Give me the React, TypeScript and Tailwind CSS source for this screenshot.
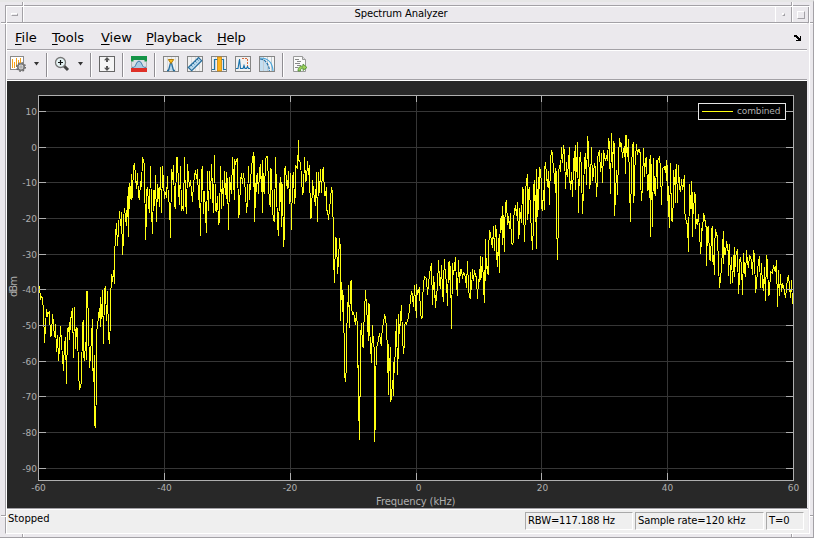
import React from "react";

const FONT = "font-['DejaVu_Sans',sans-serif]";

type Chunk = { x: number; y: number; pts: string };

// Trace samples, in thirds of a pixel relative to each chunk's origin.
const TRACE: Chunk[] = [
  {
    x: 30,
    y: 130,
    pts: "28,468 31,509 34,500 37,505 40,543 43,638 46,588 49,538 52,556 55,548 58,546 61,622 64,612 67,552 70,580 73,622 76,583 79,665 82,615 85,692 88,655 91,588 94,640 100,722 103,633 106,690 106,620 109,762 112,595 115,605 118,576 118,630 121,572 127,535 130,684 133,531 136,656 139,590 142,600 145,725 148,779 151,770 154,755 157,580 160,571 160,675 163,692 166,637 169,689 169,486 172,484 175,581 178,713 181,675 187,568 187,690 190,755 193,675 193,880 196,893 199,762 199,609 202,585 208,535 211,590 211,502 214,566 217,480 220,641 223,477 226,472 229,573 232,484 235,617 238,641 241,570 241,519 244,432 247,455 250,421 253,461 253,379 256,318 259,280 262,347 268,243 271,287 274,247 277,374 280,323 280,267 283,235 289,287 292,198 295,320 295,172 298,238 298,160 301,206 304,133 304,211 307,196 310,108 313,100 319,176 322,130 325,200 328,209 331,153 334,170 337,82 340,94 343,106 346,329 349,257 349,180 352,172 355,224 358,248 361,108 364,238 367,311 370,180 373,227 376,136 379,275 382,162 385,184 388,230 391,112 394,248 397,109 403,206 406,187 409,203 412,139 415,215 418,218 421,323 424,118 427,149 430,105 433,224 436,236 439,84 442,82 445,176 448,226 451,109 454,244 457,232 460,242 463,82 466,211 469,251 472,102 475,140 478,170 481,151 487,215 490,160 496,121 499,146 502,118 505,211 508,148 511,318 514,124 517,109 520,251 523,184 529,308 532,124 535,242 538,124",
  },
  {
    x: 210,
    y: 130,
    pts: "1,206 4,102 7,184 10,250 13,75 16,240 19,244 22,198 25,284 28,275 31,109 34,238 37,151 40,227 43,124 46,195 49,125 49,206 52,145 55,299 58,142 61,168 64,192 67,82 70,148 73,209 73,88 76,100 82,85 85,263 88,245 91,150 94,130 97,163 100,128 106,185 109,248 112,215 115,109 118,209 121,155 124,110 130,67 133,275 133,77 136,235 139,140 142,130 145,193 148,120 151,103 154,187 157,90 157,250 160,130 163,193 166,88 169,79 172,80 175,165 178,215 181,232 181,115 184,118 187,238 190,268 193,277 196,82 199,180 202,280 205,317 208,178 211,140 214,290 214,160 217,165 220,350 223,308 223,118 226,109 229,160 232,178 235,124 238,223 241,130 244,299 247,145 250,127 253,223 256,188 256,106 262,118 265,31 265,90 268,94 271,97 274,145 277,196 280,183 283,82 286,155 289,152 292,94 295,135 298,106 301,268 304,260 307,151 310,182 313,207 316,227 319,127 322,277 325,127 328,190 331,118 334,190 337,120 340,112 343,196 346,195 349,170 349,240 352,243 355,269 361,206 364,172 367,186 367,260 370,263 370,380 373,458 376,320 379,328 382,431 385,394 388,324 391,360 391,572 394,455 397,545 397,480 400,512 400,607 403,610 403,730 406,755 409,705 409,588 412,568 415,466 418,593 421,457 424,451 424,530 427,556 430,545 436,585 439,547 442,596 442,712 445,708",
  },
  {
    x: 340,
    y: 230,
    pts: "55,515 58,629 58,500 61,500 61,322 64,280 67,346 70,353 70,310 76,181 79,228 82,278 85,332 85,220 88,223 88,292 94,398 97,284 100,350 103,352 103,635 106,567 106,468 109,350 112,345 118,309 121,335 124,347 124,322 127,297 133,256 136,262 139,297 142,360 145,494 145,343 148,422 151,350 151,515 154,506 157,450 160,497 160,397 163,428 166,337 169,268 172,434 175,345 175,253 178,311 181,264 184,226 187,322 190,371 193,338 193,287 196,278 199,282 205,262 208,235 214,182 217,198 220,230 223,166 226,223 229,263 229,163 232,194 238,172 241,250 244,266 247,262 247,213 250,160 253,139 259,146 262,194 268,133 274,99 277,226 280,139 283,205 283,155 286,233 289,197 292,172 295,90 298,155 301,178 304,106 307,184 310,215 310,152 313,88 316,146 319,148 322,227 325,100 328,94 331,205 331,109 334,296 337,100 340,136 346,82 349,164 352,197 355,90 358,160 361,118 364,120 367,146 370,125 376,142 379,173 382,94 385,175 388,203 391,206 391,127 394,180 397,118 400,152 403,121 406,135 409,144 412,206 415,148 418,155",
  },
  {
    x: 480,
    y: 120,
    pts: "1,408 1,480 4,466 7,411 10,500 13,548 16,357 16,482 19,415 22,459 25,463 25,390 28,331 31,343 37,385 40,319 43,392 46,316 49,340 49,400 52,440 55,355 58,458 58,384 61,300 64,288 67,374 67,259 70,310 73,395 73,335 76,250 79,240 82,316 85,289 88,326 91,280 94,371 97,374 100,365 100,295 106,256 109,288 112,247 115,356 118,332 118,265 124,308 127,202 130,213 130,262 133,365 136,268 136,210 139,187 142,163 142,299 145,265 145,217 148,200 151,280 154,338 157,389 160,308 160,208 163,179 166,305 169,148 169,386 172,207 175,271 175,172 178,206 178,140 181,155 184,190 184,262 187,272 190,211 193,271 193,151 196,127 202,200 205,154 208,254 211,118 214,94 217,98 220,158 223,161 226,220 226,145 229,163 229,290 232,419 235,288 235,157 238,136 241,157 244,82 247,130 250,76 253,97 256,208 259,127 262,170 268,82 268,163 271,211 274,155 277,230 280,133 283,94 286,209 286,76 289,155 292,67 295,278 298,124 301,97 304,153 307,281 310,209 313,121 316,100 319,194 322,49 325,73 328,206 331,187 334,82 337,184 343,130 346,145 349,230 352,175 352,115 358,91 361,157 364,98 367,188 370,91 376,124 379,106 382,124 385,55 388,70 391,223 394,40 397,145 400,64 403,76 403,287 406,227 409,151 412,224 415,110 418,55 421,79 424,73 427,115 430,85 433,110 436,46 436,161 439,46 442,110 445,58 448,190 451,305 454,145 457,79 460,66 460,248 463,208 463,155 469,73 472,106 475,88 478,88",
  },
  {
    x: 640,
    y: 120,
    pts: "1,106 1,178 4,242 7,195 10,85 13,170 16,115 19,112 22,212 25,205 28,118 31,350 31,106 34,157 37,320 40,115 43,218 46,227 49,121 52,206 52,124 58,112 61,145 64,254 67,145 73,139 76,158 79,121 82,242 82,134 85,258 88,323 91,130 94,302 97,305 100,227 100,151 103,196 106,148 106,250 109,133 112,248 115,136 118,205 121,217 124,178 127,210 130,190 133,166 133,271 139,310 142,310 145,395 148,193 151,268 154,184 157,350 157,215 160,283 163,220 166,226 166,328 169,296 172,314 175,283 178,330 181,401 184,362 184,325 187,332 190,280 193,292 199,328 199,437 202,325 205,317 208,416 211,424 214,332 217,319 217,425 220,405 223,464 223,382 226,328 229,343 232,350 235,434 238,503 241,473 244,448 247,382 250,334 250,431 253,382 256,404 259,364 265,400 265,467 268,373 271,491 274,412 277,488 280,428 283,382 283,470 286,412 289,400 292,388 295,521 298,472 298,424 301,412 304,438 307,524 310,400 313,452 316,470 319,391 322,427 325,443 328,406 331,410 334,425 337,466 340,391 343,406 346,518 349,495 352,448 358,409 361,503 364,430 367,497 370,512 373,442 376,542 379,406 382,425 385,527 388,521 391,455 397,460 400,436 406,457 409,421 412,560 415,451 418,527 421,463 424,517 427,490 433,514 436,533 442,475 445,466 451,533 454,481 457,551",
  },
];

const tracePoints = TRACE.map(({ x, y, pts }) =>
  pts
    .split(" ")
    .map((p) => {
      const [px, py] = p.split(",").map(Number);
      return `${(x + (px + 0.5) / 3).toFixed(2)},${(y + py / 3).toFixed(2)}`;
    })
    .join(" "),
).join(" ");

const Y_TICKS: [number, string][] = [
  [111, "10"], [147, "0"], [182, "-10"], [218, "-20"], [254, "-30"], [289, "-40"],
  [325, "-50"], [361, "-60"], [396, "-70"], [432, "-80"], [468, "-90"],
];
const X_TICKS: [number, string, number][] = [
  [38, "-60", 38.5], [164, "-40", 164.5], [290, "-20", 290], [416, "0", 418.5],
  [541, "20", 542.5], [667, "40", 667.5], [793, "60", 793.5],
];

function SpectrumPlot() {
  return (
    <svg width="800" height="427" viewBox="7 81 800 427" className={`block shrink-0 bg-[#282828] ${FONT}`}>
      <rect x="38" y="95" width="756" height="386" fill="#000" shapeRendering="crispEdges" />
      <polyline points={tracePoints} fill="none" stroke="#ffff11" strokeWidth="1" shapeRendering="crispEdges" />
      <g shapeRendering="crispEdges" fill="#dfdfdf" opacity="0.24">
        {Y_TICKS.map(([y]) => <rect key={y} x="39" y={y} width="754" height="1" />)}
        {X_TICKS.slice(1, -1).map(([x]) => <rect key={x} x={x} y="96" width="1" height="384" />)}
      </g>
      <g shapeRendering="crispEdges" fill="#afafaf">
        {Y_TICKS.map(([y]) => (
          <React.Fragment key={y}>
            <rect x="39" y={y} width="7" height="1" />
            <rect x="786" y={y} width="7" height="1" />
          </React.Fragment>
        ))}
        {X_TICKS.map(([x]) => (
          <React.Fragment key={x}>
            <rect x={x} y="96" width="1" height="6" />
            <rect x={x} y="473" width="1" height="7" />
          </React.Fragment>
        ))}
      </g>
      <rect x="38.5" y="95.5" width="755" height="385" fill="none" stroke="#afafaf" shapeRendering="crispEdges" />
      <rect x="698.5" y="103.5" width="87" height="16" fill="#000" stroke="#e6e6e6" shapeRendering="crispEdges" />
      <rect x="702" y="111" width="31" height="1" fill="#ffff11" />
      <g fill="#afafaf" fontSize="9">
        <text x="737" y="114" textLength="43.5">combined</text>
        {Y_TICKS.map(([y, label]) => <text key={y} x="37" y={y + 4} textAnchor="end">{label}</text>)}
        {X_TICKS.map(([, label, x]) => <text key={label} x={x} y="491" textAnchor="middle">{label}</text>)}
        <text x="376" y="505" textLength="79.5" fontSize="10">Frequency (kHz)</text>
        <text transform="translate(17 297) rotate(-90)" textLength="21" fontSize="10">dBm</text>
      </g>
    </svg>
  );
}

function Icon({ children }: { children: React.ReactNode }) {
  return <svg width="16" height="16" viewBox="0 0 16 16" className="block shrink-0">{children}</svg>;
}

function Tile() {
  return (
    <>
      <rect x=".5" y=".5" width="15" height="15" fill="#f1f1f1" stroke="#858585" />
      <path d="M4.5 1v14M8.5 1v14M12.5 1v14" stroke="#dcdcdc" />
    </>
  );
}

function SettingsIcon() {
  return (
    <Icon>
      <rect x=".5" y=".5" width="13" height="13" fill="#fff" stroke="#8a8a8a" />
      <path d="M2.5 3v9M4.5 6v6M6.5 2v9M8.5 4v5M10.5 2v5" stroke="#f5a31a" />
      <circle cx="11" cy="11" r="3.2" fill="#ddd" stroke="#777" strokeWidth="1.6" />
      <circle cx="11" cy="11" r="4.4" fill="none" stroke="#666" strokeWidth="1.2" strokeDasharray="1.7 1.75" />
      <circle cx="11" cy="11" r="1.1" fill="#fff" stroke="#777" strokeWidth=".7" />
    </Icon>
  );
}

function ZoomIcon() {
  return (
    <Icon>
      <path d="M9.5 9.5 14 14" stroke="#444" strokeWidth="3" />
      <circle cx="6.5" cy="6.5" r="5" fill="#e6f4f5" stroke="#777" strokeWidth="1.3" />
      <path d="M4 6.5h5M6.5 4v5" stroke="#111" strokeWidth="1.2" />
    </Icon>
  );
}

function ScaleIcon() {
  return (
    <Icon>
      <rect x=".5" y=".5" width="15" height="15" fill="#f5f5f5" stroke="#666" />
      <path d="M8 1 11 4.3H9V6H7V4.3H5zM8 15 11 11.7H9V10H7v1.7H5z" fill="#555" />
    </Icon>
  );
}

function MaskIcon() {
  return (
    <Icon>
      <rect width="16" height="16" fill="#d9e0e4" />
      <path d="M0 0h16v5.5h-2.5V4h-11v1.5H0z" fill="#159447" />
      <path d="M1 11.5h1.5C5 11.5 5 5 8 5s3 6.5 5.5 6.5H15V13H1z" fill="#a9cbe2" />
      <path d="M1 11.3h1.5C5 11.3 5 5.2 8 5.2s3 6.1 5.5 6.1H15" fill="none" stroke="#3779a8" />
      <rect y="12" width="16" height="4" fill="#df3028" />
      <path d="M0 5.5v6.5M16 5.5v6.5" stroke="#8b8b8b" />
    </Icon>
  );
}

function PeakIcon() {
  return (
    <Icon>
      <Tile />
      <path d="M4 14.5h1.5L7.5 7h1l2 7.5H12" fill="#b9d9ed" stroke="#286f9e" strokeWidth="1.3" />
      <path d="M5.3 3.5h5.4L8 7.5z" fill="#ffc11c" stroke="#b37c0b" />
    </Icon>
  );
}

function MeasureIcon() {
  return (
    <Icon>
      <Tile />
      <path d="M1.3 11.5 11.5 1.5l3.2 3.2L4.7 14.7z" fill="#b9d9ed" stroke="#286f9e" strokeWidth="1.2" />
      <path d="m4 9 1.5 1.5M6 7l1.5 1.5M8 5l1.5 1.5M10 3l1.5 1.5" stroke="#286f9e" strokeWidth=".9" />
    </Icon>
  );
}

function ChannelIcon() {
  return (
    <Icon>
      <Tile />
      <path d="M1 13.5h2.5V3.5h9v10H15" fill="none" stroke="#1b75aa" strokeWidth="1.2" />
      <rect x="6.5" y="1" width="4" height="14" fill="#ffb51b" stroke="#ca860e" strokeWidth=".8" />
    </Icon>
  );
}

function DistortionIcon() {
  return (
    <Icon>
      <rect x=".5" y=".5" width="15" height="15" fill="#f1f1f1" stroke="#858585" />
      <path d="M1 12.5h2L4.5 3 5.5 12.5h2.5l1-3 1 3h1.5l1-2 1 2H15" fill="none" stroke="#1771ad" strokeWidth="1.1" />
      <path d="M7 2.5h6" stroke="#d86a3c" strokeDasharray="2 1" />
      <path d="M12.5 3v7" stroke="#d86a3c" strokeDasharray="2 1" />
    </Icon>
  );
}

function CcdfIcon() {
  return (
    <Icon>
      <rect x=".5" y=".5" width="15" height="15" fill="#f5f5f5" stroke="#858585" />
      <path d="M1 3c5 0 9 5 9.5 12H1z" fill="#c4def0" />
      <path d="M4.5 1v14M8.5 1v14M12.5 1v14" stroke="#c3ccd2" />
      <path d="M1 2C9 2 13.5 7 14 15" fill="none" stroke="#4aa6dc" strokeWidth="1.2" />
      <path d="M1 3c5 0 9 5 9.5 12" fill="none" stroke="#206fa5" strokeWidth="1.2" strokeDasharray="3 1" />
    </Icon>
  );
}

function ScriptIcon() {
  return (
    <Icon>
      <path d="M1.5.5h9l3 3v12h-12z" fill="#fafafa" stroke="#999" />
      <path d="M10.5.5v3h3" fill="#ddd" stroke="#999" />
      <path d="M3 3.5h4M5 5.5h4M3 7.5h5M5 9.5h4M3 11.5h3" stroke="#888" />
      <path d="M6 15c0-4 2-5 5-5V8l4 3.5-4 3V12c-2 0-2.5 1-2.5 3z" fill="#9ed15b" stroke="#4a8c32" strokeWidth=".8" />
    </Icon>
  );
}

function Caret() {
  return <svg width="5" height="4" viewBox="0 0 5 4" className="block"><path d="M0 0h5L2.5 3.5z" fill="#333" /></svg>;
}

function Separator() {
  return <div className="mt-0.5 h-6 w-0.5 shrink-0 border-l border-r border-l-[#8f8d92] border-r-white" />;
}

function Toolbar() {
  return (
    <div className="flex h-[30px] w-[800px] shrink-0 items-center border-b border-white pb-[3px] pl-[3px] shadow-[inset_0_-1px_0_#a3a1a6]">
      <SettingsIcon />
      <div className="ml-2"><Caret /></div>
      <div className="ml-[7px]"><Separator /></div>
      <div className="ml-1.5"><ZoomIcon /></div>
      <div className="ml-2"><Caret /></div>
      <div className="ml-[7px]"><Separator /></div>
      <div className="ml-[7px]"><ScaleIcon /></div>
      <div className="ml-[7px]"><Separator /></div>
      <div className="ml-[7px]"><MaskIcon /></div>
      <div className="ml-[7px]"><Separator /></div>
      <div className="ml-[7px] flex gap-2">
        <PeakIcon />
        <MeasureIcon />
        <ChannelIcon />
        <DistortionIcon />
        <CcdfIcon />
      </div>
      <div className="ml-[7px]"><Separator /></div>
      <div className="ml-2"><ScriptIcon /></div>
    </div>
  );
}

function MenuItem({ label, className }: { label: string; className: string }) {
  return (
    <span className={className}>
      <span className="underline underline-offset-2">{label[0]}</span>
      {label.slice(1)}
    </span>
  );
}

function MenuBar() {
  return (
    <div className="flex h-[28px] w-[800px] shrink-0 items-center border-t border-b border-white pt-0.5 pl-2 text-[13px] leading-4 shadow-[inset_0_-1px_0_#a3a1a6]">
      <MenuItem label="File" className="w-[37px]" />
      <MenuItem label="Tools" className="w-[49px]" />
      <MenuItem label="View" className="w-[45px]" />
      <MenuItem label="Playback" className="w-[71px] tracking-[-0.3px]" />
      <MenuItem label="Help" className="w-[44px] tracking-[-0.3px]" />
      <svg width="8" height="6" viewBox="0 0 8 6" className="mr-[5px] ml-auto block" shapeRendering="crispEdges">
        <path d="M0 0h3v1h1v1h1v1h1V1h1v5H2V5h2V4H3V3H2V2H0z" fill="#000" />
      </svg>
    </div>
  );
}

function TitleBar() {
  return (
    <div className="flex h-[16px] shrink-0 border-b border-[#a3a1a6] text-[10px] leading-[14px]">
      <div className="flex w-[16px] items-center justify-center border-r border-[#a3a1a6]">
        <div className="h-[3px] w-[7px] border border-t-white border-r-[#a3a1a6] border-b-[#a3a1a6] border-l-white" />
      </div>
      <div className="flex-1 border-l border-white pl-[3px] text-center">
        <span className="tracking-[-0.13px]">Spectrum Analyzer</span>
      </div>
      <div className="flex w-[17px] items-center justify-center border-r border-l border-r-[#a3a1a6] border-l-white">
        <div className="size-[3px] border border-t-white border-r-[#a3a1a6] border-b-[#a3a1a6] border-l-white" />
      </div>
      <div className="flex w-[17px] items-center justify-center border-r border-l border-r-[#a3a1a6] border-l-white">
        <div className="size-2 border border-t-white border-r-[#a3a1a6] border-b-[#a3a1a6] border-l-white" />
      </div>
    </div>
  );
}

function StatusBar() {
  const field = "h-[18px] border border-t-[#a9a9a9] border-r-white border-b-white border-l-[#a9a9a9] pl-0.5 leading-[15px] whitespace-nowrap tracking-[-0.15px]";
  return (
    <div className="flex h-[25px] w-[801px] shrink-0 border-t border-[#a3a1a6] bg-[#efefef] text-[10px] shadow-[inset_0_1px_0_white]">
      <span className="ml-px flex-1 pt-0.5 leading-[15px]">Stopped</span>
      <div className="mt-[3px] mr-[4px] flex gap-0.5">
        <div className={`w-[108px] ${field}`}>RBW=117.188 Hz</div>
        <div className={`w-[129px] ${field}`}>Sample rate=120 kHz</div>
        <div className={`w-[38px] ${field}`}>T=0</div>
      </div>
    </div>
  );
}

// Resize-handle notches engraved across the window frame.
function FrameNotches() {
  return (
    <>
      <div className="absolute top-px left-[22px] h-[5px] w-0.5 border-r border-l border-r-white border-l-[#a3a1a6]" />
      <div className="absolute top-[2px] left-[791px] h-1 w-0.5 border-r border-l border-r-white border-l-[#a3a1a6]" />
      <div className="absolute top-[22px] left-px h-0.5 w-[5px] border-t border-b border-t-[#a3a1a6] border-b-white" />
      <div className="absolute top-[22px] left-[810px] h-0.5 w-1 border-t border-b border-t-[#a3a1a6] border-b-white" />
      <div className="absolute top-[515px] left-px h-0.5 w-[5px] border-t border-b border-t-[#a3a1a6] border-b-white" />
      <div className="absolute top-[515px] left-[810px] h-0.5 w-1 border-t border-b border-t-[#a3a1a6] border-b-white" />
      <div className="absolute top-[534px] left-[22px] h-1 w-0.5 border-r border-l border-r-white border-l-[#a3a1a6]" />
      <div className="absolute top-[534px] left-[791px] h-1 w-0.5 border-r border-l border-r-white border-l-[#a3a1a6]" />
    </>
  );
}

export default function App() {
  return (
    <div className={`relative h-[538px] w-[814px] overflow-hidden border-t-2 border-r border-b border-t-[#e6e6e6] border-r-[#a3a1a6] border-b-[#a3a1a6] bg-[#ebe9ed] pt-[3px] pr-[3px] pb-[3px] pl-[5px] text-black ${FONT}`}>
      <div className="flex h-[529px] w-[805px] flex-col border border-t-[#a3a1a6] border-r-white border-b-white border-l-[#a3a1a6]">
        <div className="flex h-[527px] flex-col border-t border-l border-white">
          <TitleBar />
          <MenuBar />
          <Toolbar />
          <SpectrumPlot />
          <StatusBar />
        </div>
      </div>
      <div className="absolute -top-0.5 left-0"><FrameNotches /></div>
    </div>
  );
}
